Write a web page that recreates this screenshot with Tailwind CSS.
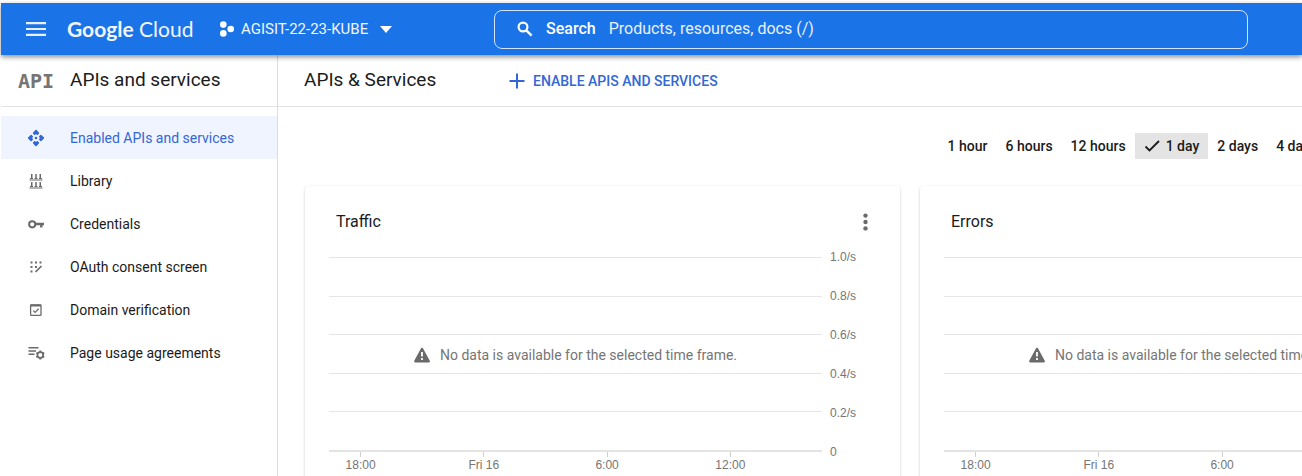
<!DOCTYPE html>
<html lang="en">
<head>
<meta charset="utf-8">
<meta name="viewport" content="width=device-width, initial-scale=1">
<title>APIs &amp; Services</title>
<script src="https://cdn.jsdelivr.net/npm/@tailwindcss/browser@4"></script>
</head>
<body class="flex h-screen flex-col overflow-hidden bg-white pt-[3px] pl-px font-[Roboto,sans-serif] text-[#1b1b1b]">

<header class="relative z-10 flex h-[52px] shrink-0 items-center bg-[#1b73e8] text-white shadow-[0_2px_5px_rgba(0,0,0,0.45)]">
  <button type="button" aria-label="Navigation menu" class="ml-[25px] flex w-[41px] items-center">
    <svg class="h-[14px] w-5" viewBox="0 0 20 14" fill="#e8f0fe"><path d="M0 0h20v2.200H0zM0 5.900h20v2.200H0zM0 11.800h20v2.200H0z"/></svg>
  </button>
  <a href="#" class="w-[152px] font-[Lato,sans-serif] text-[21px] leading-6 whitespace-nowrap text-[#f1f6fe]"><span class="font-bold">Google</span> <span>Cloud</span></a>
  <button type="button" class="flex w-[275px] items-center text-[15px] whitespace-nowrap text-[#f1f6fe]">
    <svg class="mr-1.5 h-4 w-4" viewBox="0 0 16 16" fill="#fff"><circle cx="4.300" cy="3.600" r="3.300"/><circle cx="4.300" cy="12.400" r="3.300"/><circle cx="11.700" cy="8" r="3.300"/></svg>
    AGISIT-22-23-KUBE
    <svg class="ml-3 h-[7px] w-3" viewBox="0 0 12 7" fill="#fff"><path d="M0 0h12L6 7z"/></svg>
  </button>
  <div class="mr-[54px] flex h-[39px] flex-1 items-center rounded-lg border border-[#d2e3fc]">
    <svg class="ml-[22px] h-4 w-4 shrink-0" viewBox="0 0 16 16" fill="none" stroke="#fff"><circle cx="6" cy="6" r="4.400" stroke-width="2.200"/><path d="M9.300 9.300l5.300 5.300" stroke-width="2.400"/></svg>
    <label for="search" class="ml-[13px] text-base font-medium">Search</label>
    <input id="search" type="text" placeholder="Products, resources, docs (/)" class="ml-[13px] flex-1 bg-transparent text-base outline-none placeholder:text-[#e8f0fe]">
  </div>
</header>

<div class="flex min-h-0 flex-1">
  <aside class="w-[277px] shrink-0 border-r border-[#dcdcdc]">
    <div class="flex h-[52px] items-center border-b border-[#e3e3e3] pl-[17px]">
      <span aria-hidden="true" class="w-[52px] font-['DejaVu_Sans_Mono',monospace] text-xl font-bold text-[#757575]">API</span>
      <h2 class="text-[19px]">APIs and services</h2>
    </div>
    <nav class="pt-[9px] text-sm">
      <a href="#" aria-current="page" class="flex h-[43px] items-center gap-6 bg-[#f0f4ff] pl-[25px] text-[#3367d6]">
        <svg class="h-5 w-5" viewBox="0 0 20 20" fill="#3367d6" stroke="#3367d6" stroke-width="1.600" stroke-linejoin="round"><circle cx="10" cy="10" r="1.300" stroke="none"/><path d="M10 2.600l2.300 2.500-1 1.100L10 5 8.700 6.200l-1-1.100zM10 17.400l2.300-2.500-1-1.100L10 15l-1.300-1.200-1 1.100zM2.600 10l2.500-2.300 1.100 1L5 10l1.200 1.300-1.100 1zM17.400 10l-2.500-2.300-1.100 1L15 10l-1.200 1.300 1.100 1z"/></svg>
        Enabled APIs and services
      </a>
      <a href="#" class="flex h-[43px] items-center gap-6 pl-[25px]">
        <svg class="h-5 w-5" viewBox="0 0 20 20" fill="#6b6b6b"><path d="M5 3h1.500v5H5zM9.250 3h1.500v5h-1.500zM13.500 3H15v5h-1.500zM4 7h3v1H4zM8.500 7h3v1h-3zM13 7h3v1h-3zM3.500 8.400h13v1h-13zM5 11h1.500v5H5zM9.250 11h1.500v5h-1.500zM13.500 11H15v5h-1.500zM4 15h3v1H4zM8.500 15h3v1h-3zM13 15h3v1h-3zM3.500 16.600h13v1h-13z"/></svg>
        Library
      </a>
      <a href="#" class="flex h-[43px] items-center gap-6 pl-[25px]">
        <svg class="h-5 w-5" viewBox="0 0 20 20" fill="none" stroke="#6b6b6b" stroke-width="2"><circle cx="6.200" cy="10.300" r="3.100"/><path d="M9.300 10H18M15.300 10v3.600" stroke-width="2.400"/></svg>
        Credentials
      </a>
      <a href="#" class="flex h-[43px] items-center gap-6 pl-[25px]">
        <svg class="h-5 w-5" viewBox="0 0 20 20" fill="#6b6b6b"><path d="M4.500 4.500h2v2h-2zM9 4.500h2v2H9zM13.500 4.500h2v2h-2zM4.500 9h2v2h-2zM9 9h2v2H9zM4.500 13.500h2v2h-2z"/><path d="M9.500 15l6-6" stroke="#6b6b6b" stroke-width="1.700"/></svg>
        OAuth consent screen
      </a>
      <a href="#" class="flex h-[43px] items-center gap-6 pl-[25px]">
        <svg class="h-5 w-5" viewBox="0 0 20 20" fill="none" stroke="#6b6b6b" stroke-width="1.300"><rect x="4.600" y="4.900" width="10.400" height="10.400" rx=".6"/><path d="M4.500 5.500h10.500" stroke-width="2"/><path d="M7.300 10.600l1.800 1.800 3.500-3.600"/></svg>
        Domain verification
      </a>
      <a href="#" class="flex h-[43px] items-center gap-6 pl-[25px]">
        <svg class="h-5 w-5" viewBox="0 0 20 20" fill="none" stroke="#6b6b6b"><path d="M2.500 4.700h10M2.500 8h7.500M2.500 11.300h6" stroke-width="1.600"/><circle cx="14.300" cy="12" r="2.900" stroke-width="1.700"/><path d="M14.300 7.500v2M14.300 14.500v2M10.400 9.750l1.700 1M16.500 13.250l1.700 1M18.200 9.750l-1.700 1M12.100 13.250l-1.700 1" stroke-width="1.900"/></svg>
        Page usage agreements
      </a>
    </nav>
  </aside>

  <main class="min-w-0 flex-1 overflow-hidden">
    <div class="flex h-[52px] items-center border-b border-[#e3e3e3] pl-[26px]">
      <h1 class="w-[205px] text-[19px]">APIs &amp; Services</h1>
      <button type="button" class="flex items-center gap-2 text-sm font-medium text-[#3367d6]">
        <svg class="h-4 w-4" viewBox="0 0 16 16" fill="#3367d6"><path d="M7 .5h2V7h6.500v2H9v6.500H7V9H.500V7H7z"/></svg>
        ENABLE APIS AND SERVICES
      </button>
    </div>

    <div role="group" aria-label="Time range" class="-mr-6 flex justify-end pt-[26px] text-sm font-medium whitespace-nowrap">
      <button type="button" class="h-[26px] px-[9px]">1 hour</button>
      <button type="button" class="h-[26px] px-[9px]">6 hours</button>
      <button type="button" class="h-[26px] px-[9px]">12 hours</button>
      <button type="button" aria-pressed="true" class="flex h-[26px] items-center bg-[#e4e4e4] px-[9px]">
        <svg class="mr-1.5 h-4 w-4" viewBox="0 0 16 16" fill="none" stroke="#1b1b1b" stroke-width="1.800"><path d="M1.500 8.500l4 4L15 3"/></svg>1 day
      </button>
      <button type="button" class="h-[26px] px-[9px]">2 days</button>
      <button type="button" class="h-[26px] px-[9px]">4 days</button>
    </div>

    <div class="flex gap-5 pt-[27px] pl-[27px]">
      <section class="w-[595px] shrink-0 rounded-sm pb-6 shadow-[0_1px_3px_rgba(0,0,0,0.2)]">
        <div class="flex h-[63px] items-center justify-between pt-2 pr-[25px] pl-[31px]">
          <h3 class="text-base">Traffic</h3>
          <button type="button" aria-label="More options" class="flex w-5 justify-center">
            <svg class="h-5 w-5" viewBox="0 0 20 20" fill="#6b6b6b"><circle cx="10.500" cy="3.600" r="2.200"/><circle cx="10.500" cy="10" r="2.200"/><circle cx="10.500" cy="16.400" r="2.200"/></svg>
          </button>
        </div>
        <div class="flex pr-[38px] pl-6 font-['Liberation_Sans',sans-serif] text-xs leading-4 text-[#757575]">
          <div class="flex-1 pt-2">
            <div class="relative flex h-[195px] flex-col border-b-2 border-[#e3e3e3]">
              <div class="flex-1 border-t border-[#e6e6e6]"></div>
              <div class="flex-1 border-t border-[#e6e6e6]"></div>
              <div class="flex-1 border-t border-[#e6e6e6]"></div>
              <div class="flex-1 border-t border-[#e6e6e6]"></div>
              <div class="flex-1 border-t border-[#e6e6e6]"></div>
              <p class="absolute inset-0 flex items-center justify-center gap-2.5 pt-0.5 font-[Roboto,sans-serif] text-sm whitespace-nowrap">
                <svg class="h-4 w-4" viewBox="0 0 16 16"><path d="M8 1.800L14.800 14.300H1.200z" fill="#6b6b6b" stroke="#6b6b6b" stroke-width="2.200" stroke-linejoin="round"/><path d="M7.100 5h1.800v4.500H7.100zM7.100 11h1.800v1.900H7.100z" fill="#fff"/></svg>
                No data is available for the selected time frame.
              </p>
            </div>
            <div class="mr-[30px] -ml-[30px] flex text-center">
              <div class="flex flex-1 flex-col items-center"><span class="h-[5px] w-px bg-[#cfcfcf]"></span>18:00</div>
              <div class="flex flex-1 flex-col items-center"><span class="h-[5px] w-px bg-[#cfcfcf]"></span>Fri 16</div>
              <div class="flex flex-1 flex-col items-center"><span class="h-[5px] w-px bg-[#cfcfcf]"></span>6:00</div>
              <div class="flex flex-1 flex-col items-center"><span class="h-[5px] w-px bg-[#cfcfcf]"></span>12:00</div>
            </div>
          </div>
          <div class="flex h-[211px] w-10 flex-col justify-between pl-2">
            <span>1.0/s</span><span>0.8/s</span><span>0.6/s</span><span>0.4/s</span><span>0.2/s</span><span>0</span>
          </div>
        </div>
      </section>

      <section class="w-[595px] shrink-0 rounded-sm pb-6 shadow-[0_1px_3px_rgba(0,0,0,0.2)]">
        <div class="flex h-[63px] items-center justify-between pt-2 pr-[25px] pl-[31px]">
          <h3 class="text-base">Errors</h3>
        </div>
        <div class="flex pr-[38px] pl-6 font-['Liberation_Sans',sans-serif] text-xs leading-4 text-[#757575]">
          <div class="mr-10 flex-1 pt-2">
            <div class="relative flex h-[195px] flex-col border-b-2 border-[#e3e3e3]">
              <div class="flex-1 border-t border-[#e6e6e6]"></div>
              <div class="flex-1 border-t border-[#e6e6e6]"></div>
              <div class="flex-1 border-t border-[#e6e6e6]"></div>
              <div class="flex-1 border-t border-[#e6e6e6]"></div>
              <div class="flex-1 border-t border-[#e6e6e6]"></div>
              <p class="absolute inset-0 flex items-center justify-center gap-2.5 pt-0.5 font-[Roboto,sans-serif] text-sm whitespace-nowrap">
                <svg class="h-4 w-4" viewBox="0 0 16 16"><path d="M8 1.800L14.800 14.300H1.200z" fill="#6b6b6b" stroke="#6b6b6b" stroke-width="2.200" stroke-linejoin="round"/><path d="M7.100 5h1.800v4.500H7.100zM7.100 11h1.800v1.900H7.100z" fill="#fff"/></svg>
                No data is available for the selected time frame.
              </p>
            </div>
            <div class="mr-[30px] -ml-[30px] flex text-center">
              <div class="flex flex-1 flex-col items-center"><span class="h-[5px] w-px bg-[#cfcfcf]"></span>18:00</div>
              <div class="flex flex-1 flex-col items-center"><span class="h-[5px] w-px bg-[#cfcfcf]"></span>Fri 16</div>
              <div class="flex flex-1 flex-col items-center"><span class="h-[5px] w-px bg-[#cfcfcf]"></span>6:00</div>
              <div class="flex flex-1 flex-col items-center"><span class="h-[5px] w-px bg-[#cfcfcf]"></span>12:00</div>
            </div>
          </div>
        </div>
      </section>
    </div>
  </main>
</div>
</body>
</html>
